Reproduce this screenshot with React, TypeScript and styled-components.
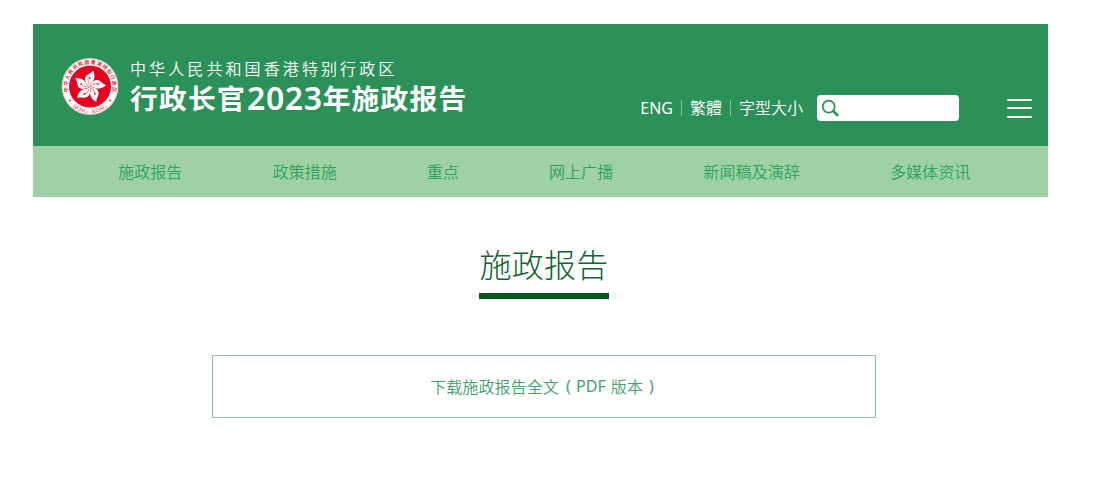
import React from "react";
import styled, { createGlobalStyle } from "styled-components";

const Global = createGlobalStyle`
  * { box-sizing: border-box; }
  body {
    margin: 0;
    background: #fff;
    font-family: "Noto Sans", "Noto Sans CJK SC", sans-serif;
  }
`;

const Page = styled.div`
  width: 1100px;
  height: 481px;
  padding: 24px 52px 0 33px;
  overflow: hidden;
`;

const Header = styled.header`
  height: 122px;
  padding: 33px 16px 0 28px;
  display: flex;
  align-items: flex-start;
  background: #2b9159;
  color: #fff;
`;

const Emblem = styled.svg`
  width: 58px;
  height: 58px;
  flex: none;
`;

const Brand = styled.div`
  margin-left: 11px;
  white-space: nowrap;
`;

const Region = styled.div`
  height: 22px;
  line-height: 24px;
  font-size: 16px;
  font-weight: 350;
  letter-spacing: 3.1px;
`;

const SiteTitle = styled.div`
  height: 38px;
  line-height: 38px;
  font-size: 27.8px;
  font-weight: 700;
  letter-spacing: 1.2px;
  display: flex;
`;

const Year = styled.span`
  margin-left: 1px;
  font-size: 32px;
  font-weight: 600;
  letter-spacing: 0.6px;
`;

const Tools = styled.div`
  margin-left: auto;
  margin-top: 38px;
  height: 26px;
  display: flex;
  align-items: center;
  font-size: 16px;
  line-height: 26px;
`;

const Link = styled.span<{ $lang?: string }>`
  font-family: "Noto Sans", ${(p) => (p.$lang === "zh-Hant" ? '"Noto Sans CJK TC"' : '"Noto Sans CJK SC"')}, sans-serif;
  font-weight: ${(p) => (p.$lang ? 350 : 400)};
  white-space: nowrap;
`;

const Divider = styled.i`
  width: 1px;
  height: 16px;
  margin: 0 8px;
  background: #84bf9d;
`;

const Search = styled.div`
  width: 142px;
  height: 26px;
  margin-left: 14px;
  padding: 4px;
  border-radius: 4px;
  background: #fff;
  display: flex;
`;

const MenuButton = styled.div`
  width: 25px;
  height: 19px;
  margin-left: 48px;
  display: flex;
  flex-direction: column;
  justify-content: space-between;
`;

const MenuBar = styled.i`
  height: 2px;
  border-radius: 1px;
  background: #f4faf6;
`;

const Nav = styled.nav`
  height: 51px;
  padding: 0 0 1px 85px;
  display: flex;
  align-items: center;
  gap: 90px;
  background: #9fd1a5;
  color: #2ba35e;
  font-size: 16.1px;
  font-weight: 350;
  white-space: nowrap;
`;

const Main = styled.main`
  display: flex;
  flex-direction: column;
  align-items: center;
  padding-top: 43px;
`;

const Heading = styled.h1`
  width: 130px;
  height: 59px;
  margin: 0 0 0 7px;
  border-bottom: 6px solid #00571b;
  color: #12632f;
  font-size: 32px;
  font-weight: 300;
  line-height: 49px;
  letter-spacing: 0.2px;
  text-align: center;
  white-space: nowrap;
`;

const Download = styled.div`
  width: 664px;
  height: 63px;
  margin: 56px 0 0 7px;
  padding: 0 4px 2px 0;
  display: flex;
  align-items: center;
  justify-content: center;
  border: 1px solid #88c2a3;
  color: #45a06e;
  font-size: 16.1px;
  font-weight: 350;
  white-space: pre;
`;

const Format = styled.span`
  margin: 0 5px 0 7px;
  font-weight: 400;
  word-spacing: 1px;
`;

const Paren = styled.span`
  margin-left: 6px;
  font-weight: 400;
`;

const petals = [0, 72, 144, 216, 288];
const motto = "中华人民共和国香港特别行政区".split("");

function RegionalEmblem() {
  return (
    <Emblem viewBox="0 0 58 58">
      <circle cx="29" cy="29.5" r="28.3" fill="#fff" />
      <circle cx="29" cy="29.5" r="27.6" fill="none" stroke="#f3a5aa" strokeWidth="0.6" />
      <circle cx="29" cy="29.5" r="21" fill="#e60020" />
      {motto.map((c, i) => (
        <text
          key={i}
          x="29"
          y="6.9"
          fontSize="5"
          fontWeight="700"
          textAnchor="middle"
          fill="#d9303f"
          transform={`rotate(${-97.5 + i * 15} 29 29.5)`}
        >
          {c}
        </text>
      ))}
      {"HONG KONG".split("").map((c, i) => (
        <text
          key={i}
          x="29"
          y="56.3"
          fontSize="5.6"
          textAnchor="middle"
          fill="#d9303f"
          fontFamily="Liberation Serif, serif"
          transform={`rotate(${36 - i * 9} 29 29.5)`}
        >
          {c}
        </text>
      ))}
      <circle cx="8.8" cy="43.5" r="1" fill="#e0303f" />
      <circle cx="49.2" cy="43.5" r="1" fill="#e0303f" />
      {petals.map((a) => (
        <g key={a} transform={`translate(28.6 29.8) rotate(${a})`}>
          <path
            d="M0 0 C-2.6 -2.2 -5 -5.4 -4.4 -8.6 C-3.7 -12.4 0.8 -12.6 3.4 -16.2 C5.2 -13 5.6 -8.6 3.4 -5.6 C1.6 -3.4 0 -2.8 0 0Z"
            fill="#fff"
          />
          <path d="M-0.4 -2.4 C-1.9 -4.6 -1.8 -6.4 -0.4 -8.4" fill="none" stroke="#e60020" strokeWidth="0.5" />
          <circle cx="0" cy="-8.9" r="0.9" fill="#e60020" />
        </g>
      ))}
    </Emblem>
  );
}

const sections = ["施政报告", "政策措施", "重点", "网上广播", "新闻稿及演辞", "多媒体资讯"];

export default function App() {
  return (
    <Page>
      <Global />
      <Header>
        <RegionalEmblem />
        <Brand>
          <Region>中华人民共和国香港特别行政区</Region>
          <SiteTitle>
            行政长官<Year>2023</Year>年施政报告
          </SiteTitle>
        </Brand>
        <Tools>
          <Link>ENG</Link>
          <Divider />
          <Link $lang="zh-Hant">繁體</Link>
          <Divider />
          <Link $lang="zh-Hans">字型大小</Link>
          <Search>
            <svg width="19" height="19" viewBox="0 0 19 19" fill="none" stroke="#2b9159">
              <circle cx="7.7" cy="7.6" r="6" strokeWidth="1.7" />
              <path d="M12.3 12.2L16.3 16" strokeWidth="2.6" strokeLinecap="round" />
            </svg>
          </Search>
          <MenuButton>
            <MenuBar />
            <MenuBar />
            <MenuBar />
          </MenuButton>
        </Tools>
      </Header>
      <Nav>
        {sections.map((s) => (
          <span key={s}>{s}</span>
        ))}
      </Nav>
      <Main>
        <Heading>施政报告</Heading>
        <Download>
          下载施政报告全文<Format>( PDF</Format>版本<Paren>)</Paren>
        </Download>
      </Main>
    </Page>
  );
}
